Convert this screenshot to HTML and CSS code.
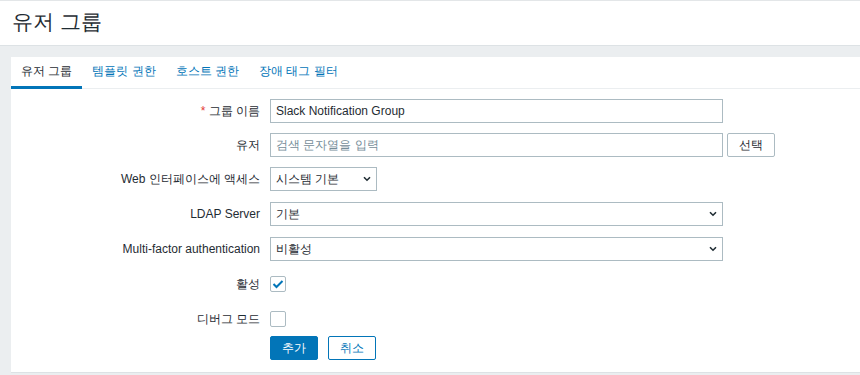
FILE: index.html
```html
<!DOCTYPE html>
<html lang="ko">
<head>
<meta charset="utf-8">
<title>유저 그룹</title>
<link rel="stylesheet" href="styles.css">
</head>
<body>
<header class="page-header">
  <h1 class="page-title">유저 그룹</h1>
</header>
<main class="content">
  <section class="card">
    <nav class="tabs">
      <span class="tab active">유저 그룹</span>
      <span class="tab">템플릿 권한</span>
      <span class="tab">호스트 권한</span>
      <span class="tab">장애 태그 필터</span>
    </nav>
    <form class="form">
      <div class="row r1">
        <label class="label"><span class="req">*</span> 그룹 이름</label>
        <div class="field"><div class="input wide">Slack Notification Group</div></div>
      </div>
      <div class="row r2">
        <label class="label">유저</label>
        <div class="field"><div class="input wide placeholder">검색 문자열을 입력</div><button type="button" class="btn-gray">선택</button></div>
      </div>
      <div class="row r3">
        <label class="label">Web 인터페이스에 액세스</label>
        <div class="field"><div class="select small"><span>시스템 기본</span><svg class="chev" width="8" height="6" viewBox="0 0 8 6"><path d="M1 1.2 L4 4.2 L7 1.2" fill="none" stroke="#1f2c33" stroke-width="1.6"/></svg></div></div>
      </div>
      <div class="row r4">
        <label class="label">LDAP Server</label>
        <div class="field"><div class="select wide"><span>기본</span><svg class="chev" width="8" height="6" viewBox="0 0 8 6"><path d="M1 1.2 L4 4.2 L7 1.2" fill="none" stroke="#1f2c33" stroke-width="1.6"/></svg></div></div>
      </div>
      <div class="row r5">
        <label class="label">Multi-factor authentication</label>
        <div class="field"><div class="select wide"><span>비활성</span><svg class="chev" width="8" height="6" viewBox="0 0 8 6"><path d="M1 1.2 L4 4.2 L7 1.2" fill="none" stroke="#1f2c33" stroke-width="1.6"/></svg></div></div>
      </div>
      <div class="row r6">
        <label class="label">활성</label>
        <div class="field"><span class="checkbox"><svg width="12" height="10" viewBox="0 0 12 10"><path d="M1.5 5 L4.5 8 L10.5 2" fill="none" stroke="#0275b8" stroke-width="2"/></svg></span></div>
      </div>
      <div class="row r7">
        <label class="label">디버그 모드</label>
        <div class="field"><span class="checkbox"></span></div>
      </div>
      <div class="row r8">
        <span class="label"></span>
        <div class="field"><button type="button" class="btn-primary">추가</button><button type="button" class="btn-alt">취소</button></div>
      </div>
    </form>
  </section>
</main>
</body>
</html>
```

FILE: styles.css
```css
* { box-sizing: border-box; }
html, body { margin: 0; padding: 0; }
body {
  background: #ebeef0;
  font-family: "Liberation Sans", sans-serif;
  font-size: 12px;
  color: #1f2c33;
  width: 860px;
  height: 375px;
  overflow: hidden;
}
.page-header {
  background: #fff;
  border-top: 1px solid #e3e6e8;
  border-bottom: 1px solid #dde2e5;
  height: 46px;
  display: flex;
  align-items: center;
  padding-left: 12px;
}
.page-title {
  margin: 0;
  font-size: 21px;
  font-weight: normal;
  line-height: 24px;
  color: #1f2c33;
  margin-top: -2px;
}
.content {
  padding: 11px 0 0 11px;
}
.card {
  background: #fff;
  height: 316px;
  border-bottom: 1px solid #dde2e5;
}
.tabs {
  display: flex;
  height: 32px;
  border-bottom: 1px solid #ebeef0;
}
.tab {
  padding: 0 10px;
  line-height: 29px;
  color: #0275b8;
  border-bottom: 3px solid transparent;
  height: 32px;
  margin-bottom: -1px;
  white-space: nowrap;
}
.tab.active {
  color: #1f2c33;
  border-bottom-color: #0275b8;
}
.form {
  padding-top: 10px;
}
.row {
  display: grid;
  grid-template-columns: 249px 1fr;
  column-gap: 10px;
  align-items: center;
  height: 24px;
}
.r1, .r2 { margin-bottom: 10px; }
.r3, .r4 { height: 25px; margin-bottom: 10px; align-items: start; }
.r5 { height: 25px; margin-bottom: 10px; align-items: start; }
.r6 { margin-bottom: 11px; }
.r7 { margin-bottom: 5px; }
.label {
  text-align: right;
  white-space: nowrap;
  line-height: 24px;
}
.req { color: #e33734; }
.field {
  display: flex;
  align-items: center;
  gap: 4px;
}
.input, .select {
  height: 24px;
  border: 1px solid #acbbc2;
  background: #fff;
  padding: 0 5px;
  line-height: 22px;
  white-space: nowrap;
}
.wide { width: 453px; }
.placeholder { color: #768d99; }
.select {
  display: flex;
  align-items: center;
  justify-content: space-between;
}
.select.small { width: 107px; }
button {
  font-family: inherit;
  font-size: 12px;
  height: 24px;
  border-radius: 2px;
  padding: 0;
  cursor: pointer;
}
.btn-gray {
  width: 48px;
  background: #fff;
  border: 1px solid #acbbc2;
  color: #1f2c33;
}
.checkbox {
  width: 16px;
  height: 16px;
  border: 1px solid #acbbc2;
  border-radius: 2px;
  display: flex;
  align-items: center;
  justify-content: center;
  background: #fff;
}
.btn-primary {
  width: 48px;
  background: #0275b8;
  border: 1px solid #0275b8;
  color: #fff;
  margin-right: 6px;
}
.btn-alt {
  width: 48px;
  background: #fff;
  border: 1px solid #0275b8;
  color: #0275b8;
}
```
